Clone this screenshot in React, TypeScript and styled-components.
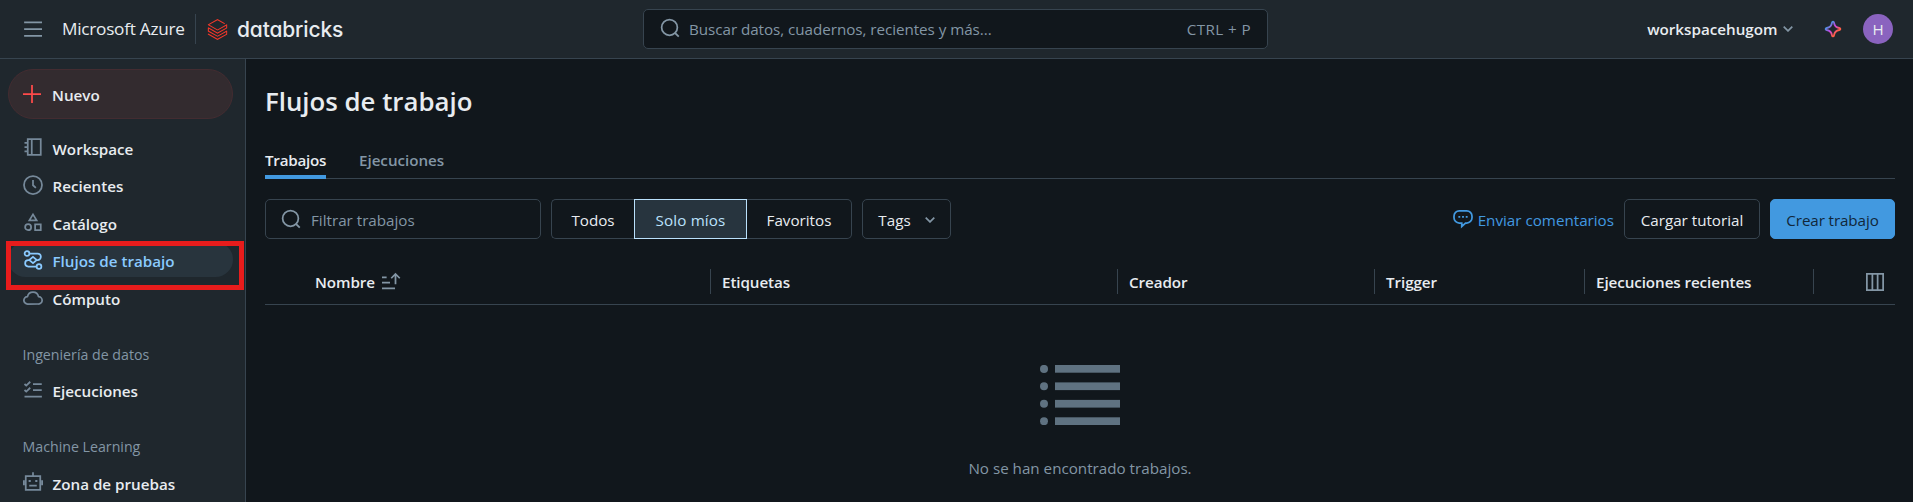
import React from "react";
import styled, { createGlobalStyle } from "styled-components";
import { SiDatabricks } from "react-icons/si";

const c = {
  bar: "#1f272d",
  page: "#11171c",
  line: "#37444f",
  text: "#e8ecf0",
  soft: "#8396a5",
  icon: "#76899a",
  muted: "#5f7281",
  blue: "#4299e0",
  sky: "#8acaff",
  pale: "#bae1fc",
};

const GlobalStyle = createGlobalStyle`
  * { box-sizing: border-box; }
  body {
    margin: 0;
    overflow: hidden;
    background: ${c.page};
    color: ${c.text};
    font: 400 15.2px/20px "Open Sans", "Noto Sans", sans-serif;
  }
  button { font: inherit; color: inherit; background: none; margin: 0; padding: 0; }
`;

const Screen = styled.div`
  display: flex;
  flex-direction: column;
  height: 502px;
  overflow: hidden;
`;

const Header = styled.header`
  display: grid;
  grid-template-columns: 643px 625px 1fr;
  align-items: center;
  height: 59px;
  flex: none;
  background: ${c.bar};
  border-bottom: 1px solid ${c.line};
`;

const Brand = styled.div`
  display: flex;
  align-items: center;
  padding-left: 23px;
`;

const Azure = styled.span`
  margin: 0 0 1px 19px;
  width: 133px;
  font-size: 17.2px;
  letter-spacing: -0.25px;
  white-space: nowrap;
`;

const Rule = styled.span`
  width: 1px;
  height: 30px;
  background: ${c.line};
`;

const Logo = styled(SiDatabricks)`
  width: 21px;
  height: 21px;
  margin: 0 9px 0 11px;
  color: #f5382a;
`;

const Wordmark = styled.span`
  margin-top: 1px;
  font: 500 21px/24px Inter, sans-serif;
  font-feature-settings: "cv11";
  letter-spacing: -0.15px;
`;

const Field = styled.div<{ $w: number; $pad: number; $gap: number; $drop?: number }>`
  display: flex;
  align-items: center;
  width: ${(p) => p.$w}px;
  height: 40px;
  padding: ${(p) => p.$drop ?? 0}px ${(p) => p.$pad}px 0;
  border: 1px solid ${c.line};
  border-radius: 5px;
  background: ${c.page};
  color: ${c.soft};
  svg { margin: -2px ${(p) => p.$gap}px 0 0; }
`;

const SearchHint = styled.span`
  letter-spacing: -0.04px;
`;

const Shortcut = styled.span`
  margin-left: auto;
  letter-spacing: 0.4px;
`;

const Account = styled.div`
  display: flex;
  align-items: center;
  justify-content: flex-end;
  padding-right: 20px;
  font-weight: 600;
`;

const WorkspaceName = styled.span`
  margin-right: 5.5px;
`;

const Avatar = styled.span`
  display: flex;
  align-items: center;
  justify-content: center;
  width: 30px;
  height: 30px;
  margin-left: 20px;
  border-radius: 50%;
  background: #8a63bf;
  font-weight: 500;
`;

const Body = styled.div`
  display: flex;
  flex: 1;
  min-height: 0;
`;

const Sidebar = styled.nav`
  position: relative;
  width: 246px;
  flex: none;
  padding: 10px 12px 0 8px;
  background: ${c.bar};
  border-right: 1px solid ${c.line};
  font-weight: 600;
`;

const NewButton = styled.button`
  display: flex;
  align-items: center;
  gap: 10px;
  width: 225px;
  height: 50px;
  margin-bottom: 10.9px;
  padding: 0 13px 1px;
  border: 1px solid #432c31;
  border-radius: 25px;
  background: #332b2f;
  font-weight: 600;
`;

const NavItem = styled.a<{ $active?: boolean }>`
  display: flex;
  align-items: center;
  gap: 9.5px;
  width: 225px;
  height: 35px;
  margin-bottom: 2.5px;
  padding: 0 15px;
  border-radius: 17.5px;
  color: ${(p) => (p.$active ? c.sky : c.text)};
  background: ${(p) => (p.$active ? "#28343d" : "transparent")};
  svg { color: ${(p) => (p.$active ? c.sky : c.icon)}; }
`;

const NavText = styled.span`
  padding-top: 3px;
`;

const NavTitle = styled.div`
  height: 32.2px;
  margin: 22.8px 0 2.5px;
  padding: 7px 0 0 14.5px;
  font-weight: 400;
  font-size: 14.2px;
  color: ${c.soft};
`;

/* Callout drawn over the menu, around the selected entry */
const Highlight = styled.div`
  position: absolute;
  left: 6px;
  top: 182px;
  width: 238px;
  height: 49px;
  border: 5px solid #e81c1c;
`;

const Main = styled.main`
  flex: 1;
  padding: 24px 18px 0 19px;
`;

const Title = styled.h1`
  margin: 0;
  font-size: 25.8px;
  line-height: 36px;
  font-weight: 600;
`;

const Tabs = styled.div`
  display: flex;
  gap: 33px;
  height: 34px;
  margin: 26px 0 20px;
  border-bottom: 1px solid ${c.line};
`;

const Tab = styled.div<{ $active?: boolean; $w: number }>`
  width: ${(p) => p.$w}px;
  height: 34px;
  padding-top: 5px;
  font-weight: 600;
  letter-spacing: ${(p) => (p.$active ? -0.25 : -0.03)}px;
  color: ${(p) => (p.$active ? c.text : c.soft)};
  border-bottom: ${(p) => (p.$active ? `4px solid ${c.blue}` : "0")};
`;

const Toolbar = styled.div`
  display: flex;
  align-items: center;
  gap: 10px;
`;

const Segments = styled.div`
  display: flex;
`;

const Segment = styled.button<{ $w: number; $side: "first" | "on" | "last" }>`
  width: ${(p) => p.$w}px;
  height: 40px;
  padding-top: 2px;
  border: 1px solid ${(p) => (p.$side === "on" ? c.pale : c.line)};
  ${(p) => p.$side === "first" && "border-right: 0; border-radius: 5px 0 0 5px;"}
  ${(p) => p.$side === "last" && "border-left: 0; border-radius: 0 5px 5px 0;"}
  ${(p) => p.$side === "on" && `background: #27343e; color: ${c.pale}; letter-spacing: 0.15px;`}
`;

const Button = styled.button<{ $w: number; $primary?: boolean }>`
  display: flex;
  align-items: center;
  justify-content: center;
  gap: 14px;
  width: ${(p) => p.$w}px;
  height: 40px;
  padding-top: 2px;
  border: 1px solid ${(p) => (p.$primary ? c.blue : c.line)};
  border-radius: 5px;
  background: ${(p) => (p.$primary ? c.blue : "transparent")};
  color: ${(p) => (p.$primary ? "#11273a" : c.text)};
  letter-spacing: ${(p) => (p.$primary ? -0.1 : 0)}px;
`;

const Feedback = styled.a`
  display: flex;
  align-items: center;
  gap: 5px;
  margin-left: auto;
  color: ${c.blue};
  span { padding-top: 2px; }
`;

const TableHead = styled.div`
  display: flex;
  align-items: center;
  height: 46px;
  margin-top: 20px;
  border-bottom: 1px solid ${c.line};
  font-weight: 600;
`;

const HeadCell = styled.div<{ $w?: number; $pad?: number }>`
  display: flex;
  align-items: center;
  gap: 6px;
  height: 25px;
  width: ${(p) => p.$w}px;
  padding: 1px 0 0 ${(p) => p.$pad ?? 11}px;
  border-right: 1px solid ${c.line};
  letter-spacing: -0.08px;
`;

const ColumnsCell = styled.div`
  display: flex;
  flex: 1;
  justify-content: flex-end;
  padding-right: 10px;
  color: ${c.soft};
`;

const Empty = styled.div`
  display: flex;
  flex-direction: column;
  align-items: center;
  gap: 33px;
  padding-top: 60px;
  color: ${c.soft};
`;

const Icon = ({ children, size = 20, color }: { children: React.ReactNode; size?: number; color?: string }) => (
  <svg
    width={size}
    height={size}
    viewBox="0 0 16 16"
    fill="none"
    stroke="currentColor"
    strokeWidth={1.4}
    color={color}
    style={{ flex: "none" }}
  >
    {children}
  </svg>
);

const SearchIcon = () => (
  <Icon>
    <circle cx="7.6" cy="7.5" r="6.3" />
    <path d="M11.8 11.8L15 14.9" />
  </Icon>
);

const ChevronIcon = () => (
  <svg width="10" height="6" viewBox="0 0 10 6" fill="none" stroke={c.soft} strokeWidth="1.7">
    <path d="M.7.7L5 4.9 9.3.7" />
  </svg>
);

const navIcons = {
  notebook: (
    <Icon>
      <path d="M3.8 1.75h10.4v12.5H3.8zM7 1.75v12.5M1.2 4.6h2.6M1.2 8h2.6M1.2 11.4h2.6" />
    </Icon>
  ),
  clock: (
    <Icon>
      <circle cx="8" cy="8" r="7.2" />
      <path d="M8 4v4.2l2.3 2.1" />
    </Icon>
  ),
  shapes: (
    <Icon>
      <path d="M8 1.9l2.9 4.8H5.1zM9.7 9.9h4.5v4.5H9.7z" />
      <circle cx="4.1" cy="12.1" r="2.4" />
    </Icon>
  ),
  workflow: (
    <Icon>
      <circle cx="3.2" cy="2.8" r="1.9" />
      <circle cx="12.8" cy="13.2" r="1.9" />
      <path d="M5.1 2.8h6.6a2.6 2.6 0 0 1 0 5.2h-.9M5.2 8h-.9a2.6 2.6 0 0 0 0 5.2h6.6M8 5.5L11 8l-3 2.5L5 8z" />
    </Icon>
  ),
  cloud: (
    <Icon>
      <path d="M3.7 13.6a2.95 2.95 0 0 1-.1-5.9 4.5 4.5 0 0 1 8.8 0 2.95 2.95 0 0 1-.1 5.9z" strokeLinejoin="round" />
    </Icon>
  ),
  checklist: (
    <Icon>
      <path d="M1.2 3.2l1.4 1.3L5.8 1.4M1.2 8l1.4 1.3 3.2-3.1M8 3.2h7M8 8h7M1.2 13.2h13.9" />
    </Icon>
  ),
  robot: (
    <Icon>
      <path d="M8 .2v3M2.2 3.3h11.6v10.9H2.2zM.7 6.6v4M15.3 6.6v4M5 10.8h6" />
      <path d="M4.5 7.2h1.7M9.8 7.2h1.7" strokeWidth="1.7" />
    </Icon>
  ),
};

const menu: { icon: keyof typeof navIcons; label: string; active?: boolean }[] = [
  { icon: "notebook", label: "Workspace" },
  { icon: "clock", label: "Recientes" },
  { icon: "shapes", label: "Catálogo" },
  { icon: "workflow", label: "Flujos de trabajo", active: true },
  { icon: "cloud", label: "Cómputo" },
];

const NavRow = ({ icon, label, active }: (typeof menu)[number]) => (
  <NavItem $active={active}>
    {navIcons[icon]}
    <NavText>{label}</NavText>
  </NavItem>
);

export default function App() {
  return (
    <Screen>
      <GlobalStyle />
      <Header>
        <Brand>
          <Icon color={c.soft}>
            <path d="M.9 2.6h14.3M.9 8h14.3M.9 13.4h14.3" />
          </Icon>
          <Azure>Microsoft Azure</Azure>
          <Rule />
          <Logo />
          <Wordmark>databricks</Wordmark>
        </Brand>
        <Field $w={625} $pad={16} $gap={9}>
          <SearchIcon />
          <SearchHint>Buscar datos, cuadernos, recientes y más...</SearchHint>
          <Shortcut>CTRL + P</Shortcut>
        </Field>
        <Account>
          <WorkspaceName>workspacehugom</WorkspaceName>
          <ChevronIcon />
          <svg width="20" height="20" viewBox="0 0 20 20" fill="none" style={{ marginLeft: 30 }}>
            <defs>
              <linearGradient id="spark" x1="3" y1="3" x2="16" y2="16" gradientUnits="userSpaceOnUse">
                <stop offset="0.2" stopColor="#4299e0" />
                <stop offset="0.5" stopColor="#ca42e0" />
                <stop offset="0.8" stopColor="#ff5f46" />
              </linearGradient>
            </defs>
            <path
              d="M10 2.6c.7 0 .9.5 1 1.1.4 3 2.3 4.9 5.3 5.3.6.1 1.1.3 1.1 1s-.5.9-1.1 1c-3 .4-4.9 2.3-5.3 5.3-.1.6-.3 1.1-1 1.1s-.9-.5-1-1.1c-.4-3-2.3-4.9-5.3-5.3-.6-.1-1.1-.3-1.1-1s.5-.9 1.1-1c3-.4 4.9-2.300 5.3-5.3.1-.6.3-1.1 1-1.1z"
              stroke="url(#spark)"
              strokeWidth="1.8"
            />
          </svg>
          <Avatar>H</Avatar>
        </Account>
      </Header>
      <Body>
        <Sidebar>
          <NewButton>
            <Icon color="#ff4a4a">
              <path d="M8 .8v14.4M.8 8h14.4" />
            </Icon>
            <NavText>Nuevo</NavText>
          </NewButton>
          {menu.map((m) => (
            <NavRow key={m.label} {...m} />
          ))}
          <NavTitle>Ingeniería de datos</NavTitle>
          <NavRow icon="checklist" label="Ejecuciones" />
          <NavTitle>Machine Learning</NavTitle>
          <NavRow icon="robot" label="Zona de pruebas" />
          <Highlight />
        </Sidebar>
        <Main>
          <Title>Flujos de trabajo</Title>
          <Tabs>
            <Tab $active $w={61}>Trabajos</Tab>
            <Tab $w={90}>Ejecuciones</Tab>
          </Tabs>
          <Toolbar>
            <Field $w={276} $pad={15} $gap={10} $drop={2}>
              <SearchIcon />
              <span>Filtrar trabajos</span>
            </Field>
            <Segments>
              <Segment $w={83} $side="first">Todos</Segment>
              <Segment $w={113} $side="on">Solo míos</Segment>
              <Segment $w={105} $side="last">Favoritos</Segment>
            </Segments>
            <Button $w={89}>
              Tags
              <ChevronIcon />
            </Button>
            <Feedback>
              <Icon>
                <path d="M5 1.5h6a4.2 4.2 0 0 1 4.2 4.2V7a4.2 4.2 0 0 1-4.2 4.2h-1L7 14v-2.8H5A4.2 4.2 0 0 1 .8 7V5.7A4.2 4.2 0 0 1 5 1.5z" />
                <path d="M4.3 6.3h1.5M7.25 6.3h1.5M10.2 6.3h1.5" />
              </Icon>
              <span>Enviar comentarios</span>
            </Feedback>
            <Button $w={136}>Cargar tutorial</Button>
            <Button $w={125} $primary>Crear trabajo</Button>
          </Toolbar>
          <TableHead>
            <HeadCell $w={446} $pad={50}>
              Nombre
              <Icon color={c.soft}>
                <path d="M.8 4.2h3.7M.8 8.4h6.4M.8 13h10.4" />
                <path d="M11.6 9.8V2M8.2 5l3.4-3.4L15 5" />
              </Icon>
            </HeadCell>
            <HeadCell $w={407}>Etiquetas</HeadCell>
            <HeadCell $w={257}>Creador</HeadCell>
            <HeadCell $w={210}>Trigger</HeadCell>
            <HeadCell $w={229}>Ejecuciones recientes</HeadCell>
            <ColumnsCell>
              <Icon>
                <path d="M1.5 1.5h13v13h-13zM5.9 1.5v13M10.1 1.5v13" />
              </Icon>
            </ColumnsCell>
          </TableHead>
          <Empty>
            <svg width="80" height="60" viewBox="0 0 80 60" fill={c.muted}>
              {[0, 17.4, 34.9, 52.3].map((y) => (
                <g key={y}>
                  <circle cx="4" cy={y + 3.9} r="4" />
                  <rect x="15" y={y} width="65" height="7.7" />
                </g>
              ))}
            </svg>
            <span>No se han encontrado trabajos.</span>
          </Empty>
        </Main>
      </Body>
    </Screen>
  );
}
